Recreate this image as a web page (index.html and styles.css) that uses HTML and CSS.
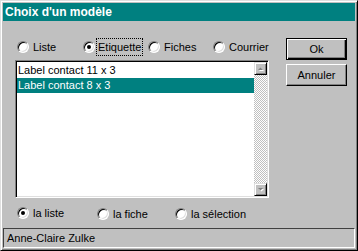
FILE: index.html
```html
<!DOCTYPE html>
<html>
  <head>
    <meta charset="UTF-8">
    <title>Choix d'un modèle</title>
    <link rel="stylesheet" href="styles.css">
  </head>

  <body>
    <div class="window">
      <div class="titlebar">Choix d'un modèle</div>

      <div class="main">
        <div class="content">
          <div class="options options-top">
            <label class="option"><span class="radio"></span>Liste</label>
            <label class="option"><span class="radio radio-checked radio-focus"></span><span class="focus">Etiquette</span></label>
            <label class="option"><span class="radio"></span>Fiches</label>
            <label class="option"><span class="radio"></span>Courrier</label>
          </div>

          <div class="listbox">
            <ul class="items">
              <li class="item">Label contact 11 x 3</li>
              <li class="item item-selected">Label contact 8 x 3</li>
            </ul>
            <div class="scrollbar">
              <div class="scroll-btn">
                <svg width="11" height="11" viewBox="0 0 11 11">
                  <polygon points="3,7 8,7 5.5,4.5" fill="#fff" transform="translate(1,1)"/>
                  <polygon points="3,7 8,7 5.5,4.5" fill="#808080"/>
                </svg>
              </div>
              <div class="scroll-track"></div>
              <div class="scroll-btn">
                <svg width="11" height="11" viewBox="0 0 11 11">
                  <polygon points="3,4 8,4 5.5,6.5" fill="#fff" transform="translate(1,1)"/>
                  <polygon points="3,4 8,4 5.5,6.5" fill="#808080"/>
                </svg>
              </div>
            </div>
          </div>

          <div class="options options-bottom">
            <label class="option"><span class="radio radio-checked"></span>la liste</label>
            <label class="option"><span class="radio"></span>la fiche</label>
            <label class="option"><span class="radio"></span>la sélection</label>
          </div>
        </div>

        <div class="buttons">
          <button class="btn btn-default">Ok</button>
          <button class="btn">Annuler</button>
        </div>
      </div>

      <div class="statusbar">Anne-Claire Zulke</div>
    </div>
  </body>
</html>
```

FILE: styles.css
```css
* {
  box-sizing: border-box;
  font-family: "Liberation Sans", Arial, sans-serif;
  font-size: 11px;
}

body {
  margin: 0;
}

.window {
  width: 358px;
  height: 251px;
  background: #c0c0c0;
  border: 1px solid;
  border-color: #dfdfdf #000 #000 #dfdfdf;
  box-shadow: inset 1px 1px #fff, inset -1px -1px #808080;
  padding: 2px;
  display: flex;
  flex-direction: column;
}

.titlebar {
  height: 18px;
  background: #008080;
  color: #fff;
  font-size: 12px;
  font-weight: bold;
  line-height: 18px;
  padding-left: 2px;
}

.main {
  height: 206px;
  margin-top: 1px;
  display: flex;
}

.content {
  padding: 16px 0 0 12px;
}

.options {
  display: flex;
  height: 18px;
  padding-left: 2px;
}

.option {
  display: flex;
  align-items: center;
}

.options-top .option:nth-child(1) { width: 66px; }
.options-top .option:nth-child(2) { width: 65px; }
.options-top .option:nth-child(3) { width: 65px; }

.options-bottom {
  margin-top: 6px;
}

.options-bottom .option:nth-child(1) { width: 80px; }
.options-bottom .option:nth-child(2) { width: 78px; }

.options-bottom .option:nth-child(2),
.options-bottom .option:nth-child(3) {
  padding-top: 2px;
}

.radio {
  position: relative;
  width: 12px;
  height: 12px;
  margin-right: 4px;
  border-radius: 50%;
  border: 1px solid;
  border-color: #808080 #fff #fff #808080;
  background: #fff;
  box-shadow: inset 1px 1px #000, inset -1px -1px #dfdfdf;
}

.radio-focus {
  margin-right: 1px;
}

.radio-checked::after {
  content: "";
  position: absolute;
  left: 3px;
  top: 3px;
  width: 4px;
  height: 4px;
  border-radius: 50%;
  background: #000;
}

.focus {
  height: 18px;
  line-height: 16px;
  padding: 0 1px;
  border: 1px dotted #000;
}

.listbox {
  width: 254px;
  height: 138px;
  margin-top: 4px;
  display: flex;
  background: #fff;
  border: 1px solid;
  border-color: #808080 #fff #fff #808080;
  box-shadow: inset 1px 1px #000, inset -1px -1px #dfdfdf;
  padding: 1px;
}

.items {
  flex: 1;
  margin: 0;
  padding: 1px 0 0;
  list-style: none;
}

.item {
  height: 15px;
  line-height: 15px;
  padding-left: 1px;
}

.item-selected {
  background: #008080;
  color: #fff;
}

.scrollbar {
  width: 13px;
  display: flex;
  flex-direction: column;
}

.scroll-btn {
  height: 13px;
  background: #c0c0c0;
  border: 1px solid;
  border-color: #dfdfdf #000 #000 #dfdfdf;
  box-shadow: inset 1px 1px #fff, inset -1px -1px #808080;
  display: flex;
  align-items: center;
  justify-content: center;
}

.scroll-track {
  flex: 1;
  background: repeating-conic-gradient(#c0c0c0 0 25%, #fff 0 50%) 0 0 / 2px 2px;
}

.buttons {
  margin-left: 17px;
  padding-top: 16px;
  display: flex;
  flex-direction: column;
  gap: 4px;
}

.btn {
  width: 61px;
  height: 22px;
  padding: 0;
  background: #c0c0c0;
  color: #000;
  border: 1px solid;
  border-color: #fff #000 #000 #fff;
  box-shadow: inset -1px -1px #808080;
}

.btn-default {
  border-color: #000;
  box-shadow: inset 1px 1px #fff, inset -1px -1px #000, inset -2px -2px #808080;
}

.statusbar {
  height: 20px;
  margin-top: 0;
  border: 1px solid;
  border-color: #404040 #fff #fff #404040;
  line-height: 18px;
  padding-left: 3px;
}
```
